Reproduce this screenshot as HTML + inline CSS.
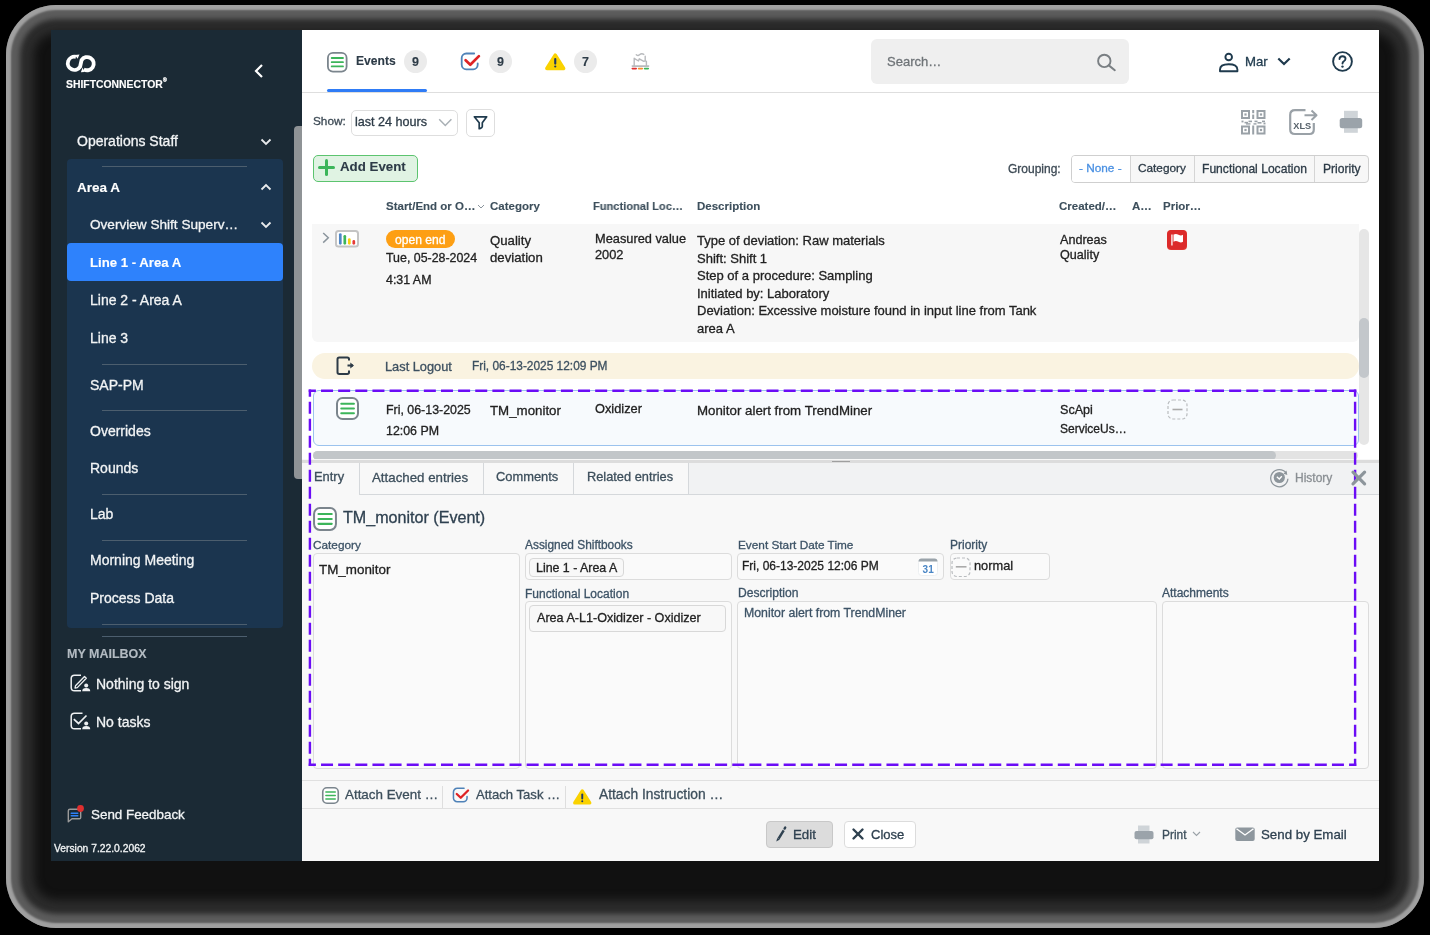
<!DOCTYPE html>
<html><head><meta charset="utf-8"><style>
html,body{margin:0;padding:0;}
body{width:1430px;height:935px;background:#000;position:relative;overflow:hidden;font-family:"Liberation Sans",sans-serif;}
.t{position:absolute;line-height:1;white-space:nowrap;will-change:transform;-webkit-text-stroke:0.3px currentColor;}
.r{position:absolute;}
svg.r{overflow:visible;}
</style></head><body>
<div class="r" style="left:6px;top:5px;width:1418px;height:923px;border-radius:50px;background:#111;box-shadow:inset 0 0 2px 5px rgb(160,160,160), inset 0 0 5px 14px rgb(92,92,92), inset 0 0 10px 28px rgb(44,44,44);"></div>
<div class="r" style="left:51px;top:30px;width:1328px;height:831px;background:#fff;"></div>
<div class="r" style="left:51px;top:30px;width:251px;height:831px;background:#1b2a35;"></div>
<svg class="r" style="left:60px;top:50px;" width="42" height="26" viewBox="0 0 42 26"><g fill="none" stroke="#fff" stroke-width="3.8">
<path d="M15.9 6.9 A6.6 6.6 0 1 0 20.1 16.7 L21.58 10.1 A6.6 6.6 0 1 1 23.7 19.3"/></g>
<path d="M14.8 4.9 L19.5 4.6 L17.6 8.7Z M24.2 21.9 L20.9 22.3 L22.6 17.6Z" fill="#fff"/></svg>
<div class="t" style="left:66px;top:79.70px;font-size:10.4px;color:#fff;font-weight:bold;-webkit-text-stroke-width:0.12px;">SHIFTCONNECTOR</div>
<div class="t" style="left:163px;top:78px;font-size:5px;color:#fff">®</div>
<svg class="r" style="left:252px;top:63px;" width="14" height="16" viewBox="0 0 14 16"><path d="M10 2 L4 8 L10 14" fill="none" stroke="#fff" stroke-width="2.2"/></svg>
<div class="t" style="left:77px;top:134.15px;font-size:14px;color:#f2f4f5;">Operations Staff</div>
<svg class="r" style="left:260px;top:138px;" width="12" height="8" viewBox="0 0 12 8"><path d="M1.5 1.5 L6 6 L10.5 1.5" fill="none" stroke="#e8eaec" stroke-width="1.8"/></svg>
<div class="r" style="left:67px;top:159px;width:216px;height:469px;background:#1b354f;border-radius:4px;"></div>
<div class="r" style="left:102px;top:166px;width:145px;height:1px;background:#4c5e6e;"></div>
<div class="t" style="left:77px;top:180.57px;font-size:13.5px;color:#fff;font-weight:bold;-webkit-text-stroke-width:0.12px;">Area A</div>
<svg class="r" style="left:260px;top:183px;" width="12" height="8" viewBox="0 0 12 8"><path d="M1.5 6.5 L6 2 L10.5 6.5" fill="none" stroke="#e8eaec" stroke-width="1.8"/></svg>
<div class="t" style="left:90px;top:217.99px;font-size:13.6px;color:#f2f4f5;">Overview Shift Superv…</div>
<svg class="r" style="left:260px;top:221px;" width="12" height="8" viewBox="0 0 12 8"><path d="M1.5 1.5 L6 6 L10.5 1.5" fill="none" stroke="#e8eaec" stroke-width="1.8"/></svg>
<div class="r" style="left:67px;top:243px;width:216px;height:38px;background:#2e82fc;border-radius:4px;"></div>
<div class="t" style="left:90px;top:255.83px;font-size:13.2px;color:#fff;font-weight:bold;-webkit-text-stroke-width:0.12px;">Line 1 - Area A</div>
<div class="t" style="left:90px;top:293.15px;font-size:14px;color:#f2f4f5;">Line 2 - Area A</div>
<div class="t" style="left:90px;top:330.65px;font-size:14px;color:#f2f4f5;">Line 3</div>
<div class="r" style="left:102px;top:364px;width:145px;height:1px;background:#4c5e6e;"></div>
<div class="r" style="left:102px;top:410px;width:145px;height:1px;background:#4c5e6e;"></div>
<div class="r" style="left:102px;top:494px;width:145px;height:1px;background:#4c5e6e;"></div>
<div class="r" style="left:102px;top:540px;width:145px;height:1px;background:#4c5e6e;"></div>
<div class="r" style="left:102px;top:624px;width:145px;height:1px;background:#4c5e6e;"></div>
<div class="t" style="left:90px;top:377.65px;font-size:14px;color:#f2f4f5;">SAP-PM</div>
<div class="t" style="left:90px;top:423.65px;font-size:14px;color:#f2f4f5;">Overrides</div>
<div class="t" style="left:90px;top:461.15px;font-size:14px;color:#f2f4f5;">Rounds</div>
<div class="t" style="left:90px;top:507.15px;font-size:14px;color:#f2f4f5;">Lab</div>
<div class="t" style="left:90px;top:553.15px;font-size:14px;color:#f2f4f5;">Morning Meeting</div>
<div class="t" style="left:90px;top:590.65px;font-size:14px;color:#f2f4f5;">Process Data</div>
<div class="r" style="left:102px;top:636px;width:145px;height:1px;background:#4c5e6e;"></div>
<div class="t" style="left:67px;top:647.92px;font-size:12.5px;color:#b3bbc2;font-weight:bold;-webkit-text-stroke-width:0.12px;">MY MAILBOX</div>
<div class="t" style="left:95.5px;top:677.15px;font-size:14px;color:#f2f4f5;">Nothing to sign</div>
<div class="t" style="left:95.5px;top:715.15px;font-size:14px;color:#f2f4f5;">No tasks</div>
<div class="t" style="left:91px;top:807.66px;font-size:13.4px;color:#f2f4f5;">Send Feedback</div>
<div class="t" style="left:54px;top:844.28px;font-size:10.3px;color:#f2f4f5;">Version 7.22.0.2062</div>
<div class="r" style="left:294px;top:126px;width:8px;height:353px;background:#8f9396;border-radius:4px 0 0 4px;"></div>
<div class="r" style="left:302px;top:92px;width:1077px;height:1px;background:#dedede;"></div>
<div class="r" style="left:327px;top:89px;width:100px;height:3px;background:#2f7cf6;border-radius:2px;"></div>
<div class="t" style="left:356px;top:55.26px;font-size:12.1px;color:#2d3b47;font-weight:bold;-webkit-text-stroke-width:0.12px;">Events</div>
<div class="r" style="left:404px;top:50px;width:23px;height:23px;background:#ebebeb;border-radius:50%;"></div>
<div class="t" style="left:412px;top:55.92px;font-size:12.5px;color:#2d3b47;font-weight:bold;-webkit-text-stroke-width:0.12px;">9</div>
<div class="r" style="left:489px;top:50px;width:23px;height:23px;background:#ebebeb;border-radius:50%;"></div>
<div class="t" style="left:497px;top:55.92px;font-size:12.5px;color:#2d3b47;font-weight:bold;-webkit-text-stroke-width:0.12px;">9</div>
<div class="r" style="left:574px;top:50px;width:23px;height:23px;background:#ebebeb;border-radius:50%;"></div>
<div class="t" style="left:582px;top:55.92px;font-size:12.5px;color:#2d3b47;font-weight:bold;-webkit-text-stroke-width:0.12px;">7</div>
<div class="r" style="left:871px;top:39px;width:258px;height:45px;background:#efefef;border-radius:6px;"></div>
<div class="t" style="left:887px;top:55.00px;font-size:13px;color:#6f7478;">Search…</div>
<div class="t" style="left:1245px;top:54.83px;font-size:13.2px;color:#1f3a4d;">Mar</div>
<div class="t" style="left:313px;top:115.81px;font-size:11.8px;color:#3d4a55;">Show:</div>
<div class="r" style="left:351px;top:109.5px;width:107px;height:26px;border:1.3px solid #dedede;border-radius:5px;box-sizing:border-box;"></div>
<div class="t" style="left:355px;top:115.93px;font-size:12.6px;color:#2d3b47;">last 24 hours</div>
<div class="r" style="left:466px;top:109px;width:28.5px;height:27.5px;border:1.3px solid #dedede;border-radius:5px;box-sizing:border-box;"></div>
<div class="r" style="left:313px;top:155px;width:105px;height:27px;background:#e0f3e3;border:1.5px solid #5cc46f;border-radius:5px;box-sizing:border-box;"></div>
<div class="t" style="left:340px;top:160.24px;font-size:13.3px;color:#2d3b47;font-weight:bold;-webkit-text-stroke-width:0.12px;">Add Event</div>
<div class="t" style="left:1008px;top:163.34px;font-size:12px;color:#3d4a55;">Grouping:</div>
<div class="r" style="left:1071px;top:155px;width:298px;height:28px;border:1px solid #cfcfcf;border-radius:4px;box-sizing:border-box;background:#f7f7f7;"></div>
<div class="r" style="left:1072px;top:156px;width:58px;height:26px;background:#fff;border-radius:3px 0 0 3px;"></div>
<div class="r" style="left:1130px;top:156px;width:1px;height:26px;background:#d5d5d5;"></div>
<div class="r" style="left:1194px;top:156px;width:1px;height:26px;background:#d5d5d5;"></div>
<div class="r" style="left:1314px;top:156px;width:1px;height:26px;background:#d5d5d5;"></div>
<div class="t" style="left:1079px;top:163.01px;font-size:11.8px;color:#4a90e2;">- None -</div>
<div class="t" style="left:1138px;top:163.01px;font-size:11.8px;color:#2d3b47;">Category</div>
<div class="t" style="left:1202px;top:162.76px;font-size:12.1px;color:#2d3b47;">Functional Location</div>
<div class="t" style="left:1323px;top:162.76px;font-size:12.1px;color:#2d3b47;">Priority</div>
<div class="t" style="left:386px;top:201.27px;font-size:11.5px;color:#3d4f5c;font-weight:bold;-webkit-text-stroke-width:0.12px;">Start/End or O…</div>
<div class="t" style="left:490px;top:201.27px;font-size:11.5px;color:#3d4f5c;font-weight:bold;-webkit-text-stroke-width:0.12px;">Category</div>
<div class="t" style="left:593px;top:201.27px;font-size:11.5px;color:#3d4f5c;font-weight:bold;-webkit-text-stroke-width:0.12px;transform:scaleX(0.965);transform-origin:0 0;">Functional Loc…</div>
<div class="t" style="left:697px;top:201.27px;font-size:11.5px;color:#3d4f5c;font-weight:bold;-webkit-text-stroke-width:0.12px;">Description</div>
<div class="t" style="left:1059px;top:201.27px;font-size:11.5px;color:#3d4f5c;font-weight:bold;-webkit-text-stroke-width:0.12px;">Created/…</div>
<div class="t" style="left:1132px;top:201.27px;font-size:11.5px;color:#3d4f5c;font-weight:bold;-webkit-text-stroke-width:0.12px;">A…</div>
<div class="t" style="left:1163px;top:201.27px;font-size:11.5px;color:#3d4f5c;font-weight:bold;-webkit-text-stroke-width:0.12px;">Prior…</div>
<div class="r" style="left:312px;top:224px;width:1047px;height:118px;background:#f7f7f7;border-radius:0 0 6px 6px;"></div>
<div class="r" style="left:386px;top:230px;width:69px;height:18px;background:#fd9f14;border-radius:9px;"></div>
<div class="t" style="left:395px;top:233.76px;font-size:12.1px;color:#fff;">open end</div>
<div class="t" style="left:386px;top:252.00px;font-size:12.4px;color:#222;">Tue, 05-28-2024</div>
<div class="t" style="left:386px;top:273.50px;font-size:12.4px;color:#222;">4:31 AM</div>
<div class="t" style="left:490px;top:233.83px;font-size:13.2px;color:#222;">Quality</div>
<div class="t" style="left:490px;top:251.33px;font-size:13.2px;color:#222;">deviation</div>
<div class="t" style="left:595px;top:233.16px;font-size:12.8px;color:#222;">Measured value</div>
<div class="t" style="left:595px;top:248.66px;font-size:12.8px;color:#222;">2002</div>
<div class="t" style="left:697px;top:234.00px;font-size:13px;color:#222;">Type of deviation: Raw materials</div>
<div class="t" style="left:697px;top:251.60px;font-size:13px;color:#222;">Shift: Shift 1</div>
<div class="t" style="left:697px;top:269.20px;font-size:13px;color:#222;">Step of a procedure: Sampling</div>
<div class="t" style="left:697px;top:286.80px;font-size:13px;color:#222;">Initiated by: Laboratory</div>
<div class="t" style="left:697px;top:304.40px;font-size:13px;color:#222;">Deviation: Excessive moisture found in input line from Tank</div>
<div class="t" style="left:697px;top:322.00px;font-size:13px;color:#222;">area A</div>
<div class="t" style="left:1060px;top:234.33px;font-size:12.6px;color:#222;">Andreas</div>
<div class="t" style="left:1060px;top:248.83px;font-size:12.6px;color:#222;">Quality</div>
<div class="r" style="left:1167px;top:230px;width:20px;height:20px;background:#e33b35;border-radius:4px;"></div>
<div class="r" style="left:312px;top:353px;width:1047px;height:26px;background:#faf3e1;border-radius:13px;"></div>
<div class="t" style="left:385px;top:360.66px;font-size:12.8px;color:#3d5060;">Last Logout</div>
<div class="t" style="left:472px;top:361.43px;font-size:11.9px;color:#3d5060;">Fri, 06-13-2025 12:09 PM</div>
<div class="r" style="left:313px;top:390px;width:1046px;height:56px;background:#f7fafd;border:1px solid #9cc3ee;border-radius:6px;box-sizing:border-box;"></div>
<div class="t" style="left:386px;top:403.50px;font-size:12.4px;color:#222;">Fri, 06-13-2025</div>
<div class="t" style="left:386px;top:424.50px;font-size:12.4px;color:#222;">12:06 PM</div>
<div class="t" style="left:490px;top:403.74px;font-size:13.3px;color:#222;">TM_monitor</div>
<div class="t" style="left:595px;top:402.66px;font-size:12.8px;color:#222;">Oxidizer</div>
<div class="t" style="left:697px;top:403.74px;font-size:13.3px;color:#222;">Monitor alert from TrendMiner</div>
<div class="t" style="left:1060px;top:404.33px;font-size:12.6px;color:#222;">ScApi</div>
<div class="t" style="left:1060px;top:422.84px;font-size:12px;color:#222;">ServiceUs…</div>
<div class="r" style="left:1359px;top:229px;width:10px;height:216px;background:#e6e6e6;border-radius:5px;"></div>
<div class="r" style="left:1359px;top:318px;width:10px;height:60px;background:#c3c7cb;border-radius:5px;"></div>
<div class="r" style="left:313px;top:451px;width:1045px;height:9px;background:#e3e3e3;border-radius:5px;"></div>
<div class="r" style="left:313px;top:451px;width:963px;height:9px;background:#c2c6c9;border-radius:5px;"></div>
<div class="r" style="left:302px;top:459px;width:1077px;height:402px;background:#f8f8f8;"></div>
<div class="r" style="left:302px;top:459.5px;width:1077px;height:3.5px;background:#dcdcdc;"></div>
<div class="r" style="left:832px;top:460.5px;width:18px;height:1.7px;background:#9f9f9f;"></div>
<div class="r" style="left:302px;top:463px;width:1077px;height:32px;background:#f1f2f3;border-bottom:1px solid #d5d8db;box-sizing:border-box;"></div>
<div class="r" style="left:302px;top:463px;width:58px;height:32px;background:#f8f8f8;border-right:1px solid #d5d8db;box-sizing:border-box;"></div>
<div class="r" style="left:360px;top:463px;width:124px;height:32px;background:#f8f8f8;border-right:1px solid #d5d8db;border-bottom:1px solid #d5d8db;box-sizing:border-box;"></div>
<div class="r" style="left:484px;top:463px;width:90px;height:32px;background:#f8f8f8;border-right:1px solid #d5d8db;border-bottom:1px solid #d5d8db;box-sizing:border-box;"></div>
<div class="r" style="left:574px;top:463px;width:115px;height:32px;background:#f8f8f8;border-right:1px solid #d5d8db;border-bottom:1px solid #d5d8db;box-sizing:border-box;"></div>
<div class="t" style="left:313.5px;top:471.08px;font-size:12.9px;color:#3d4f5c;">Entry</div>
<div class="t" style="left:371.5px;top:470.74px;font-size:13.3px;color:#3d4f5c;">Attached entries</div>
<div class="t" style="left:495.5px;top:471.08px;font-size:12.9px;color:#3d4f5c;">Comments</div>
<div class="t" style="left:586.5px;top:471.16px;font-size:12.8px;color:#3d4f5c;">Related entries</div>
<div class="t" style="left:1295px;top:471.84px;font-size:12px;color:#8a8f93;">History</div>
<div class="t" style="left:343px;top:509.37px;font-size:16.1px;color:#2f4150;">TM_monitor (Event)</div>
<div class="t" style="left:313px;top:540.01px;font-size:11.8px;color:#3d5366;">Category</div>
<div class="r" style="left:313px;top:553px;width:207px;height:216px;background:#fafafa;border:1px solid #dcdcdc;border-radius:4px;box-sizing:border-box;"></div>
<div class="t" style="left:319px;top:562.66px;font-size:13.4px;color:#222;">TM_monitor</div>
<div class="t" style="left:525px;top:539.93px;font-size:11.9px;color:#3d5366;">Assigned Shiftbooks</div>
<div class="r" style="left:525px;top:553px;width:207px;height:27px;background:#fafafa;border:1px solid #dcdcdc;border-radius:4px;box-sizing:border-box;"></div>
<div class="r" style="left:529px;top:558px;width:95px;height:19px;background:#f8f8f8;border:1px solid #d8d8d8;border-radius:4px;box-sizing:border-box;"></div>
<div class="t" style="left:536px;top:562.00px;font-size:12.4px;color:#222;">Line 1 - Area A</div>
<div class="t" style="left:525px;top:587.84px;font-size:12px;color:#3d5366;">Functional Location</div>
<div class="r" style="left:525px;top:601px;width:207px;height:168px;background:#fafafa;border:1px solid #dcdcdc;border-radius:4px;box-sizing:border-box;"></div>
<div class="r" style="left:529px;top:605px;width:197px;height:27px;background:#f8f8f8;border:1px solid #d8d8d8;border-radius:4px;box-sizing:border-box;"></div>
<div class="t" style="left:536.5px;top:612.03px;font-size:12.6px;color:#222;">Area A-L1-Oxidizer - Oxidizer</div>
<div class="t" style="left:738px;top:539.51px;font-size:11.8px;color:#3d5366;">Event Start Date Time</div>
<div class="r" style="left:737px;top:553px;width:207px;height:27px;background:#fafafa;border:1px solid #dcdcdc;border-radius:4px;box-sizing:border-box;"></div>
<div class="t" style="left:742px;top:560.34px;font-size:12px;color:#222;">Fri, 06-13-2025 12:06 PM</div>
<div class="t" style="left:950px;top:539.34px;font-size:12px;color:#3d5366;">Priority</div>
<div class="r" style="left:950px;top:553px;width:100px;height:27px;background:#fafafa;border:1px solid #dcdcdc;border-radius:4px;box-sizing:border-box;"></div>
<div class="t" style="left:974px;top:559.66px;font-size:12.8px;color:#222;">normal</div>
<div class="t" style="left:738px;top:586.76px;font-size:12.1px;color:#3d5366;">Description</div>
<div class="r" style="left:737px;top:601px;width:420px;height:168px;background:#fafafa;border:1px solid #dcdcdc;border-radius:4px;box-sizing:border-box;"></div>
<div class="t" style="left:744px;top:607.09px;font-size:12.3px;color:#3d5366;">Monitor alert from TrendMiner</div>
<div class="t" style="left:1162px;top:586.84px;font-size:12px;color:#3d5366;">Attachments</div>
<div class="r" style="left:1162px;top:601px;width:207px;height:168px;background:#fafafa;border:1px solid #dcdcdc;border-radius:4px;box-sizing:border-box;"></div>
<svg class="r" style="left:0;top:0" width="1430" height="935"><path d="M308.7 390.7 H1356.3" fill="none" stroke="#6b0cf6" stroke-width="2.4" stroke-dasharray="12 5.134" stroke-dashoffset="4.8"/><path d="M308.7 764.8 H1356.3" fill="none" stroke="#6b0cf6" stroke-width="2.4" stroke-dasharray="12 5.134" stroke-dashoffset="4.8"/><path d="M309.9 389.5 V766.0" fill="none" stroke="#6b0cf6" stroke-width="2.4" stroke-dasharray="12 5.005" stroke-dashoffset="4.8"/><path d="M1355.1 389.5 V766.0" fill="none" stroke="#6b0cf6" stroke-width="2.4" stroke-dasharray="12 5.005" stroke-dashoffset="4.8"/></svg>
<div class="r" style="left:302px;top:780px;width:1077px;height:1px;background:#e0e0e0;"></div>
<div class="r" style="left:302px;top:808px;width:1077px;height:1px;background:#e0e0e0;"></div>
<div class="t" style="left:345px;top:787.66px;font-size:13.4px;color:#3d4f5c;">Attach Event …</div>
<div class="r" style="left:442px;top:786px;width:1px;height:22px;background:#dedede;"></div>
<div class="t" style="left:476px;top:787.91px;font-size:13.1px;color:#3d4f5c;">Attach Task …</div>
<div class="r" style="left:565px;top:786px;width:1px;height:22px;background:#dedede;"></div>
<div class="t" style="left:598.5px;top:788.32px;font-size:13.8px;color:#3d4f5c;">Attach Instruction …</div>
<div class="r" style="left:766px;top:821px;width:67px;height:27px;background:#dcdcdc;border:1px solid #c8c8c8;border-radius:4px;box-sizing:border-box;"></div>
<div class="t" style="left:793px;top:827.74px;font-size:13.3px;color:#2f4150;">Edit</div>
<div class="r" style="left:844px;top:821px;width:72px;height:27px;background:#fff;border:1px solid #dcdcdc;border-radius:4px;box-sizing:border-box;"></div>
<div class="t" style="left:871px;top:828.00px;font-size:13px;color:#2f4150;">Close</div>
<div class="t" style="left:1162px;top:829.93px;font-size:11.9px;color:#3d4f5c;">Print</div>
<div class="t" style="left:1261px;top:827.74px;font-size:13.3px;color:#2f4150;">Send by Email</div>
<svg class="r" style="left:327px;top:51.5px;" width="20.5" height="20.5" viewBox="0 0 20.5 20.5"><rect x="0.9" y="0.9" width="18.7" height="18.7" rx="5.0" fill="#fff" stroke="#7b858d" stroke-width="1.8"/>
<g stroke="#3cb55a" stroke-width="1.8" stroke-linecap="round"><line x1="4.7" y1="6.0" x2="16.0" y2="6.0"/><line x1="4.7" y1="10.2" x2="16.0" y2="10.2"/><line x1="4.7" y1="14.4" x2="16.0" y2="14.4"/></g></svg>
<svg class="r" style="left:460px;top:52px;" width="20" height="20" viewBox="0 0 20 20"><path d="M14.2 1.5 H6.2 A4.5 4.5 0 0 0 1.7 6.0 V12.8 A4.5 4.5 0 0 0 6.2 17.3 H13.2 A4.5 4.5 0 0 0 17.7 12.8 V11.3" fill="none" stroke="#4f82b8" stroke-width="1.8" stroke-linecap="round"/>
<path d="M5.6 8.2 L10.3 12.7 L18.9 4.1" fill="none" stroke="#de2326" stroke-width="2.7" stroke-linejoin="round" stroke-linecap="round"/></svg>
<svg class="r" style="left:545px;top:53px;" width="20.5" height="17.5" viewBox="0 0 20.5 17.5"><path d="M10.25 2.2 L18.6 15.5 H1.9 Z" fill="#fad200" stroke="#fad200" stroke-width="3.6" stroke-linejoin="round"/>
<line x1="10.25" y1="6.0" x2="10.25" y2="10.6" stroke="#1f3866" stroke-width="2.1" stroke-linecap="round"/><circle cx="10.25" cy="13.5" r="1.1" fill="#1f3866"/></svg>
<svg class="r" style="left:626px;top:48px;" width="30" height="26" viewBox="0 0 30 26"><g fill="none" stroke="#b8babd" stroke-width="1.4" stroke-linejoin="round" stroke-linecap="round">
<path d="M8.2 18.1 V10.3 L12.5 13 L13.3 10.8 L17.8 13.3 L19.2 12.8 V8.3 M19.4 12.9 L20.4 13.3 V18.1"/><path d="M10.3 6.7 Q12 8.2 13.5 6.8 Q15.6 5 17.8 6.4"/><line x1="6.3" y1="18.1" x2="22.6" y2="18.1" stroke-width="1.6"/></g>
<g stroke-width="1.6" stroke-linecap="round"><line x1="6.3" y1="20.6" x2="10.2" y2="20.6" stroke="#e02f2f"/><line x1="12.6" y1="20.6" x2="16.3" y2="20.6" stroke="#f7902e"/><line x1="18.6" y1="20.6" x2="22.3" y2="20.6" stroke="#3cb55a"/></g></svg>
<svg class="r" style="left:1096px;top:53px;" width="21" height="19" viewBox="0 0 21 19"><circle cx="8.3" cy="7.9" r="6.2" fill="none" stroke="#7a7f83" stroke-width="1.9"/><line x1="12.8" y1="12.4" x2="18.8" y2="17.2" stroke="#7a7f83" stroke-width="2" stroke-linecap="round"/></svg>
<svg class="r" style="left:1218px;top:52px;" width="21" height="21" viewBox="0 0 21 21"><circle cx="10.7" cy="5" r="3.3" fill="none" stroke="#1f3a4d" stroke-width="1.9"/><path d="M2 19.2 V17.5 Q2 12.3 10.7 12.3 Q19.4 12.3 19.4 17.5 V19.2 Z" fill="none" stroke="#1f3a4d" stroke-width="1.9" stroke-linejoin="round"/></svg>
<svg class="r" style="left:1277px;top:57px;" width="14" height="9" viewBox="0 0 14 9"><path d="M1.3 1.5 L7 7 L12.7 1.5" fill="none" stroke="#1f3a4d" stroke-width="2.2"/></svg>
<svg class="r" style="left:1332px;top:51px;" width="21" height="21" viewBox="0 0 21 21"><circle cx="10.5" cy="10.5" r="9.4" fill="none" stroke="#1f3a4d" stroke-width="1.9"/><path d="M7.5 8 Q7.6 5.2 10.5 5.2 Q13.5 5.2 13.5 7.8 Q13.5 9.3 11.8 10.3 Q10.5 11 10.5 12.6" fill="none" stroke="#1f3a4d" stroke-width="1.9" stroke-linecap="round"/><circle cx="10.5" cy="15.6" r="1.2" fill="#1f3a4d"/></svg>
<svg class="r" style="left:438px;top:118px;" width="15" height="9" viewBox="0 0 15 9"><path d="M1.2 1.2 L7.3 7.5 L13.4 1.2" fill="none" stroke="#a9b0b5" stroke-width="1.5"/></svg>
<svg class="r" style="left:473px;top:115px;" width="15" height="15" viewBox="0 0 15 15"><path d="M1.3 1.8 H13.7 L9.3 7.8 V11.5 Q9.3 12.6 7.4 13.4 L6.2 13.7 V7.8 Z" fill="none" stroke="#1f3a4d" stroke-width="1.7" stroke-linejoin="round"/></svg>
<svg class="r" style="left:318px;top:159px;" width="17" height="17" viewBox="0 0 17 17"><g stroke="#3cb55a" stroke-width="3" stroke-linecap="round"><line x1="8.5" y1="1.5" x2="8.5" y2="15.5"/><line x1="1.5" y1="8.5" x2="15.5" y2="8.5"/></g></svg>
<svg class="r" style="left:1240.5px;top:110px;" width="24.5" height="24.5" viewBox="0 0 24.5 24.5"><g fill="#9aa1a7"><path d="M0 0 h9 v9 h-9Z M2 2 v5 h5 v-5Z" fill-rule="evenodd"/><rect x="3.4" y="3.4" width="2.2" height="2.2"/><path d="M15.5 0 h9 v9 h-9Z M17.5 2 v5 h5 v-5Z" fill-rule="evenodd"/><rect x="18.9" y="3.4" width="2.2" height="2.2"/><path d="M0 15.5 h9 v9 h-9Z M2 17.5 v5 h5 v-5Z" fill-rule="evenodd"/><rect x="3.4" y="18.9" width="2.2" height="2.2"/><path d="M15.5 15.5 h9 v9 h-9Z M17.5 17.5 v5 h5 v-5Z" fill-rule="evenodd"/><rect x="18.9" y="18.9" width="2.2" height="2.2"/><rect x="11.2" y="0" width="2" height="3.2"/><rect x="11.2" y="4.6" width="2" height="4.4"/><rect x="11.2" y="15.5" width="2" height="9"/><rect x="0.5" y="10.6" width="2" height="1.8"/><rect x="3.5" y="11.8" width="3.5" height="1.6"/><rect x="7.5" y="10.6" width="3.5" height="1.6"/><rect x="13.5" y="10.6" width="3" height="1.6"/><rect x="16.5" y="12" width="4" height="1.6"/><rect x="21" y="10.6" width="3" height="1.6"/><rect x="22.5" y="12.6" width="2" height="1.8"/><rect x="5" y="13.2" width="4.5" height="1.4"/><rect x="12.5" y="13.2" width="3" height="1.4"/></g></svg>
<svg class="r" style="left:1289px;top:109px;" width="29" height="26" viewBox="0 0 29 26"><path d="M16.5 1.2 H6 Q1.2 1.2 1.2 6 V20.5 Q1.2 25 6 25 H20.5 Q24.8 25 24.8 20.5 V14" fill="none" stroke="#9aa1a7" stroke-width="2.2"/>
<path d="M15.5 6.3 H27.5 M22.5 1.5 L27.5 6.3 L22.5 11" fill="none" stroke="#9aa1a7" stroke-width="2" stroke-linejoin="round"/>
<text x="4.3" y="19.8" font-family="Liberation Sans" font-weight="bold" font-size="9.2" fill="#56616a">XLS</text></svg>
<svg class="r" style="left:1339px;top:110px;" width="24" height="23" viewBox="0 0 24 23"><rect x="5" y="0.8" width="13.8" height="22" fill="#cfd4d8"/><rect x="0.7" y="8" width="22.5" height="10.3" rx="2.5" fill="#9ba3aa"/></svg>
<svg class="r" style="left:477px;top:204px;" width="8" height="5" viewBox="0 0 8 5"><path d="M1 1 L4 4 L7 1" fill="none" stroke="#8a949c" stroke-width="1"/></svg>
<svg class="r" style="left:322px;top:232px;" width="8" height="12" viewBox="0 0 8 12"><path d="M1.2 1 L6.3 5.8 L1.2 10.6" fill="none" stroke="#8a949c" stroke-width="1.5"/></svg>
<svg class="r" style="left:335px;top:230px;" width="24" height="18" viewBox="0 0 24 18"><rect x="1" y="1" width="22" height="15.6" rx="2.5" fill="#fff" stroke="#c4c4c4" stroke-width="2"/>
<g stroke-width="2.7" stroke-linecap="round"><line x1="5.3" y1="4.5" x2="5.3" y2="13.3" stroke="#4f86c6"/><line x1="9.8" y1="6.3" x2="9.8" y2="13.3" stroke="#3cb55a"/><line x1="14.3" y1="9.6" x2="14.3" y2="13.3" stroke="#f7cf0e"/><line x1="18.8" y1="11.4" x2="18.8" y2="13.3" stroke="#e53935"/></g></svg>
<svg class="r" style="left:1167px;top:230px;" width="20" height="20" viewBox="0 0 20 20"><rect x="0" y="0" width="19.8" height="19.5" rx="5" fill="#dc2a2a"/><rect x="4" y="4.5" width="1.8" height="11" fill="#f4c4c4"/><path d="M6.5 4.6 Q9 3.3 11.5 4.8 Q14 6.2 16 4.8 V11.8 Q14 13.2 11.5 11.8 Q9 10.4 6.5 11.7 Z" fill="#fff"/></svg>
<svg class="r" style="left:336px;top:356px;" width="20" height="20" viewBox="0 0 20 20"><path d="M13 4.5 V3.2 Q13 1.5 11.3 1.5 H3.3 Q1.5 1.5 1.5 3.3 V16.3 Q1.5 18 3.3 18 H11.3 Q13 18 13 16.3 V14.5" fill="none" stroke="#2d3b47" stroke-width="2"/>
<path d="M11.5 9.5 H17" stroke="#2d3b47" stroke-width="2"/><path d="M14.3 6.5 L18 9.5 L14.3 12.5 Z" fill="#2d3b47"/></svg>
<svg class="r" style="left:335.5px;top:397px;" width="23" height="23" viewBox="0 0 23 23"><rect x="1.0097560975609758" y="1.0097560975609758" width="20.98048780487805" height="20.98048780487805" rx="5.609756097560976" fill="#fff" stroke="#7b858d" stroke-width="2"/>
<g stroke="#3cb55a" stroke-width="2.0195121951219517" stroke-linecap="round"><line x1="5.273170731707318" y1="6.731707317073171" x2="17.951219512195124" y2="6.731707317073171"/><line x1="5.273170731707318" y1="11.44390243902439" x2="17.951219512195124" y2="11.44390243902439"/><line x1="5.273170731707318" y1="16.156097560975613" x2="17.951219512195124" y2="16.156097560975613"/></g></svg>
<svg class="r" style="left:1167px;top:399px;" width="21" height="21" viewBox="0 0 21 21"><rect x="1" y="1" width="19" height="19" rx="5" fill="none" stroke="#b9bcbf" stroke-width="1.2" stroke-dasharray="3 2"/><line x1="5.5" y1="10.5" x2="15.5" y2="10.5" stroke="#aaa" stroke-width="1.6"/></svg>
<svg class="r" style="left:1269px;top:467px;" width="21" height="21" viewBox="0 0 21 21"><path d="M17.2 6 A8.6 8.6 0 1 0 18.9 11.8" fill="none" stroke="#8d959b" stroke-width="1.3"/><path d="M17.5 3.5 L18.3 8 L14.5 6.8Z" fill="#8d959b"/>
<circle cx="10.3" cy="10.5" r="5.6" fill="#8d959b"/><path d="M7.8 9.8 L10.3 12 L12.8 9.3" fill="none" stroke="#fff" stroke-width="1.3"/></svg>
<svg class="r" style="left:1350px;top:469px;z-index:5;will-change:transform;" width="18" height="18" viewBox="0 0 18 18"><g stroke="#8d959b" stroke-width="3.2" stroke-linecap="round"><line x1="3" y1="3.2" x2="14.6" y2="14.8"/><line x1="14.6" y1="3.2" x2="3" y2="14.8"/></g></svg>
<svg class="r" style="left:313px;top:507px;" width="24" height="24" viewBox="0 0 24 24"><rect x="1.053658536585366" y="1.053658536585366" width="21.892682926829266" height="21.892682926829266" rx="5.853658536585366" fill="#fff" stroke="#7b858d" stroke-width="2"/>
<g stroke="#3cb55a" stroke-width="2.107317073170732" stroke-linecap="round"><line x1="5.5024390243902435" y1="7.024390243902438" x2="18.73170731707317" y2="7.024390243902438"/><line x1="5.5024390243902435" y1="11.941463414634145" x2="18.73170731707317" y2="11.941463414634145"/><line x1="5.5024390243902435" y1="16.858536585365854" x2="18.73170731707317" y2="16.858536585365854"/></g></svg>
<svg class="r" style="left:918px;top:557px;" width="20" height="19" viewBox="0 0 20 19"><rect x="0.5" y="2.5" width="19" height="16" rx="3" fill="#fff" stroke="#eceff1" stroke-width="1"/><path d="M0.5 4.5 Q0.5 1.5 3.5 1.5 H16.5 Q19.5 1.5 19.5 4.5 Z" fill="#9aa3aa"/>
<text x="4.6" y="15.6" font-family="Liberation Sans" font-weight="bold" font-size="10" fill="#4a86c5">31</text></svg>
<svg class="r" style="left:951px;top:557px;" width="20" height="20" viewBox="0 0 20 20"><rect x="1" y="1" width="18" height="18.5" rx="5" fill="none" stroke="#b9bcbf" stroke-width="1.2" stroke-dasharray="3 2"/><line x1="4.8" y1="9.8" x2="15.5" y2="9.8" stroke="#aaa" stroke-width="1.6"/></svg>
<svg class="r" style="left:321.5px;top:786.5px;" width="17" height="17" viewBox="0 0 17 17"><rect x="0.7463414634146341" y="0.7463414634146341" width="15.50731707317073" height="15.50731707317073" rx="4.146341463414634" fill="#fff" stroke="#7b858d" stroke-width="1.6"/>
<g stroke="#3cb55a" stroke-width="1.4926829268292683" stroke-linecap="round"><line x1="3.897560975609756" y1="4.975609756097561" x2="13.268292682926829" y2="4.975609756097561"/><line x1="3.897560975609756" y1="8.458536585365852" x2="13.268292682926829" y2="8.458536585365852"/><line x1="3.897560975609756" y1="11.941463414634146" x2="13.268292682926829" y2="11.941463414634146"/></g></svg>
<svg class="r" style="left:452px;top:787px;" width="17" height="17" viewBox="0 0 17 17"><path d="M12.069999999999999 1.275 H5.27 A3.8249999999999997 3.8249999999999997 0 0 0 1.4449999999999998 5.1 V10.88 A3.8249999999999997 3.8249999999999997 0 0 0 5.27 14.705 H11.219999999999999 A3.8249999999999997 3.8249999999999997 0 0 0 15.044999999999998 10.88 V9.605" fill="none" stroke="#4f82b8" stroke-width="1.53" stroke-linecap="round"/>
<path d="M4.76 6.969999999999999 L8.755 10.795 L16.064999999999998 3.4849999999999994" fill="none" stroke="#de2326" stroke-width="2.295" stroke-linejoin="round" stroke-linecap="round"/></svg>
<svg class="r" style="left:573px;top:789px;" width="18.5" height="15" viewBox="0 0 18.5 15"><path d="M9.25 1.9853658536585368 L16.78536585365854 13.987804878048781 H1.7146341463414634 Z" fill="#fad200" stroke="#fad200" stroke-width="3.2487804878048783" stroke-linejoin="round"/>
<line x1="9.25" y1="5.414634146341464" x2="9.25" y2="9.565853658536586" stroke="#1f3866" stroke-width="1.8951219512195123" stroke-linecap="round"/><circle cx="9.25" cy="12.182926829268293" r="0.9926829268292684" fill="#1f3866"/></svg>
<svg class="r" style="left:775px;top:826px;" width="12" height="18" viewBox="0 0 12 18"><path d="M9.6 2.6 L10.2 1.6" stroke="#2f4150" stroke-width="2.4" stroke-linecap="round"/><path d="M8.7 4.4 L3.6 12.6" stroke="#2f4150" stroke-width="2.5"/><path d="M2.3 12 L4.9 13.5 L1.2 15.6Z" fill="#2f4150"/></svg>
<svg class="r" style="left:852px;top:828px;" width="12" height="12" viewBox="0 0 12 12"><g stroke="#2f4150" stroke-width="2.4" stroke-linecap="round"><line x1="1.5" y1="1.5" x2="10.5" y2="10.5"/><line x1="10.5" y1="1.5" x2="1.5" y2="10.5"/></g></svg>
<svg class="r" style="left:1134px;top:825px;" width="20" height="19" viewBox="0 0 20 19"><rect x="4" y="0.5" width="11.5" height="18" fill="#cfd4d8"/><rect x="0.5" y="6" width="19" height="8.2" rx="2" fill="#9ba3aa"/></svg>
<svg class="r" style="left:1192px;top:831px;" width="9" height="6" viewBox="0 0 9 6"><path d="M1 1 L4.5 4.5 L8 1" fill="none" stroke="#9aa1a7" stroke-width="1.1"/></svg>
<svg class="r" style="left:1235px;top:827px;" width="20" height="15" viewBox="0 0 20 15"><rect x="0.3" y="0.5" width="19.4" height="13.5" rx="2" fill="#8e979e"/><path d="M1.5 1.8 L10 8 L18.5 1.8" fill="none" stroke="#fff" stroke-width="1.4"/></svg>
<svg class="r" style="left:70px;top:674px;" width="22" height="19" viewBox="0 0 22 19"><path d="M11 1.2 H4.5 Q1.2 1.2 1.2 4.5 V13.5 Q1.2 16.8 4.5 16.8 H11" fill="none" stroke="#eef0f2" stroke-width="1.5"/><path d="M5.5 11.8 L14.5 2.5 L16.3 4.3 L7.3 13.6 L5 14.2Z" fill="none" stroke="#eef0f2" stroke-width="1.3" stroke-linejoin="round"/><circle cx="16.2" cy="11.5" r="2" fill="#eef0f2"/><path d="M12.2 17.2 Q12.2 14 16.2 14 Q20.2 14 20.2 17.2Z" fill="#eef0f2"/></svg>
<svg class="r" style="left:70px;top:712px;" width="22" height="19" viewBox="0 0 22 19"><path d="M12.5 1.2 H4.5 Q1.2 1.2 1.2 4.5 V13.5 Q1.2 16.8 4.5 16.8 H11" fill="none" stroke="#eef0f2" stroke-width="1.5"/><path d="M3.8 7.2 L8.5 11.5 L16.5 3.5" fill="none" stroke="#eef0f2" stroke-width="1.7"/><circle cx="16.2" cy="11.5" r="2" fill="#eef0f2"/><path d="M12.2 17.2 Q12.2 14 16.2 14 Q20.2 14 20.2 17.2Z" fill="#eef0f2"/></svg>
<svg class="r" style="left:67px;top:804px;" width="18" height="19" viewBox="0 0 18 19"><path d="M3 5.3 H12.5 Q13.7 5.3 13.7 6.5 V13.5 Q13.7 14.7 12.5 14.7 H5 L1.3 17.8 V6.8 Q1.3 5.3 3 5.3Z" fill="none" stroke="#9a9a9a" stroke-width="1.4" stroke-linejoin="round"/>
<g stroke="#2f80f7" stroke-width="1.4" stroke-linecap="round"><line x1="4.2" y1="9.3" x2="10.8" y2="9.3"/><line x1="4.2" y1="11.7" x2="10.8" y2="11.7"/></g><circle cx="13.5" cy="4.5" r="3.4" fill="#e02f2f"/></svg>
</body></html>
